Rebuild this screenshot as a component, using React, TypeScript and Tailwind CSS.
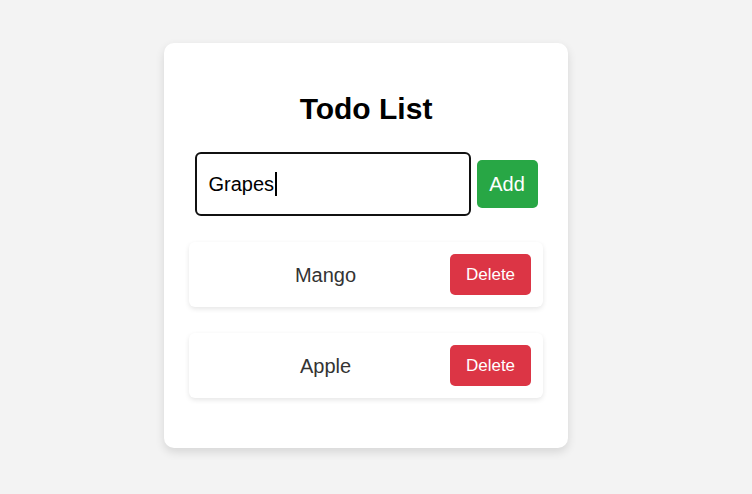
import React from "react";

export default function App() {
  return (
    <div className="min-h-[494px] w-full bg-[#f3f3f3] pt-[43px]" style={{ fontFamily: '"Liberation Sans", Arial, sans-serif' }}>
      <div className="ml-[164px] w-[404px] rounded-[10px] bg-white px-[25px] pt-[49px] pb-[50px] shadow-[0_4px_10px_rgba(0,0,0,0.12)]">
        <h1 className="text-center text-[30px] leading-[34px] font-bold text-black">Todo List</h1>
        <div className="mt-[26px] flex items-center justify-center gap-[6px]">
          <div className="flex h-[64px] w-[276px] items-center rounded-[6px] border-2 border-[#111] pl-[12px] text-[20px] text-black">
            <span>Grapes</span>
            <span className="ml-[1px] inline-block h-[24px] w-[2px] bg-black" />
          </div>
          <button className="h-[48px] w-[61px] rounded-[5px] bg-[#28a745] text-[20px] text-white">Add</button>
        </div>
        <div className="mt-[26px] flex flex-col gap-[26px]">
          {["Mango", "Apple"].map((t) => (
            <div key={t} className="flex h-[65px] items-center rounded-[6px] bg-white pr-[12px] pl-[12px] shadow-[0_2px_5px_rgba(0,0,0,0.1)]">
              <span className="flex-1 text-center text-[20px] text-[#333]">{t}</span>
              <button className="h-[41px] w-[81px] rounded-[5px] bg-[#dc3545] text-[17px] text-white">Delete</button>
            </div>
          ))}
        </div>
      </div>
    </div>
  );
}
